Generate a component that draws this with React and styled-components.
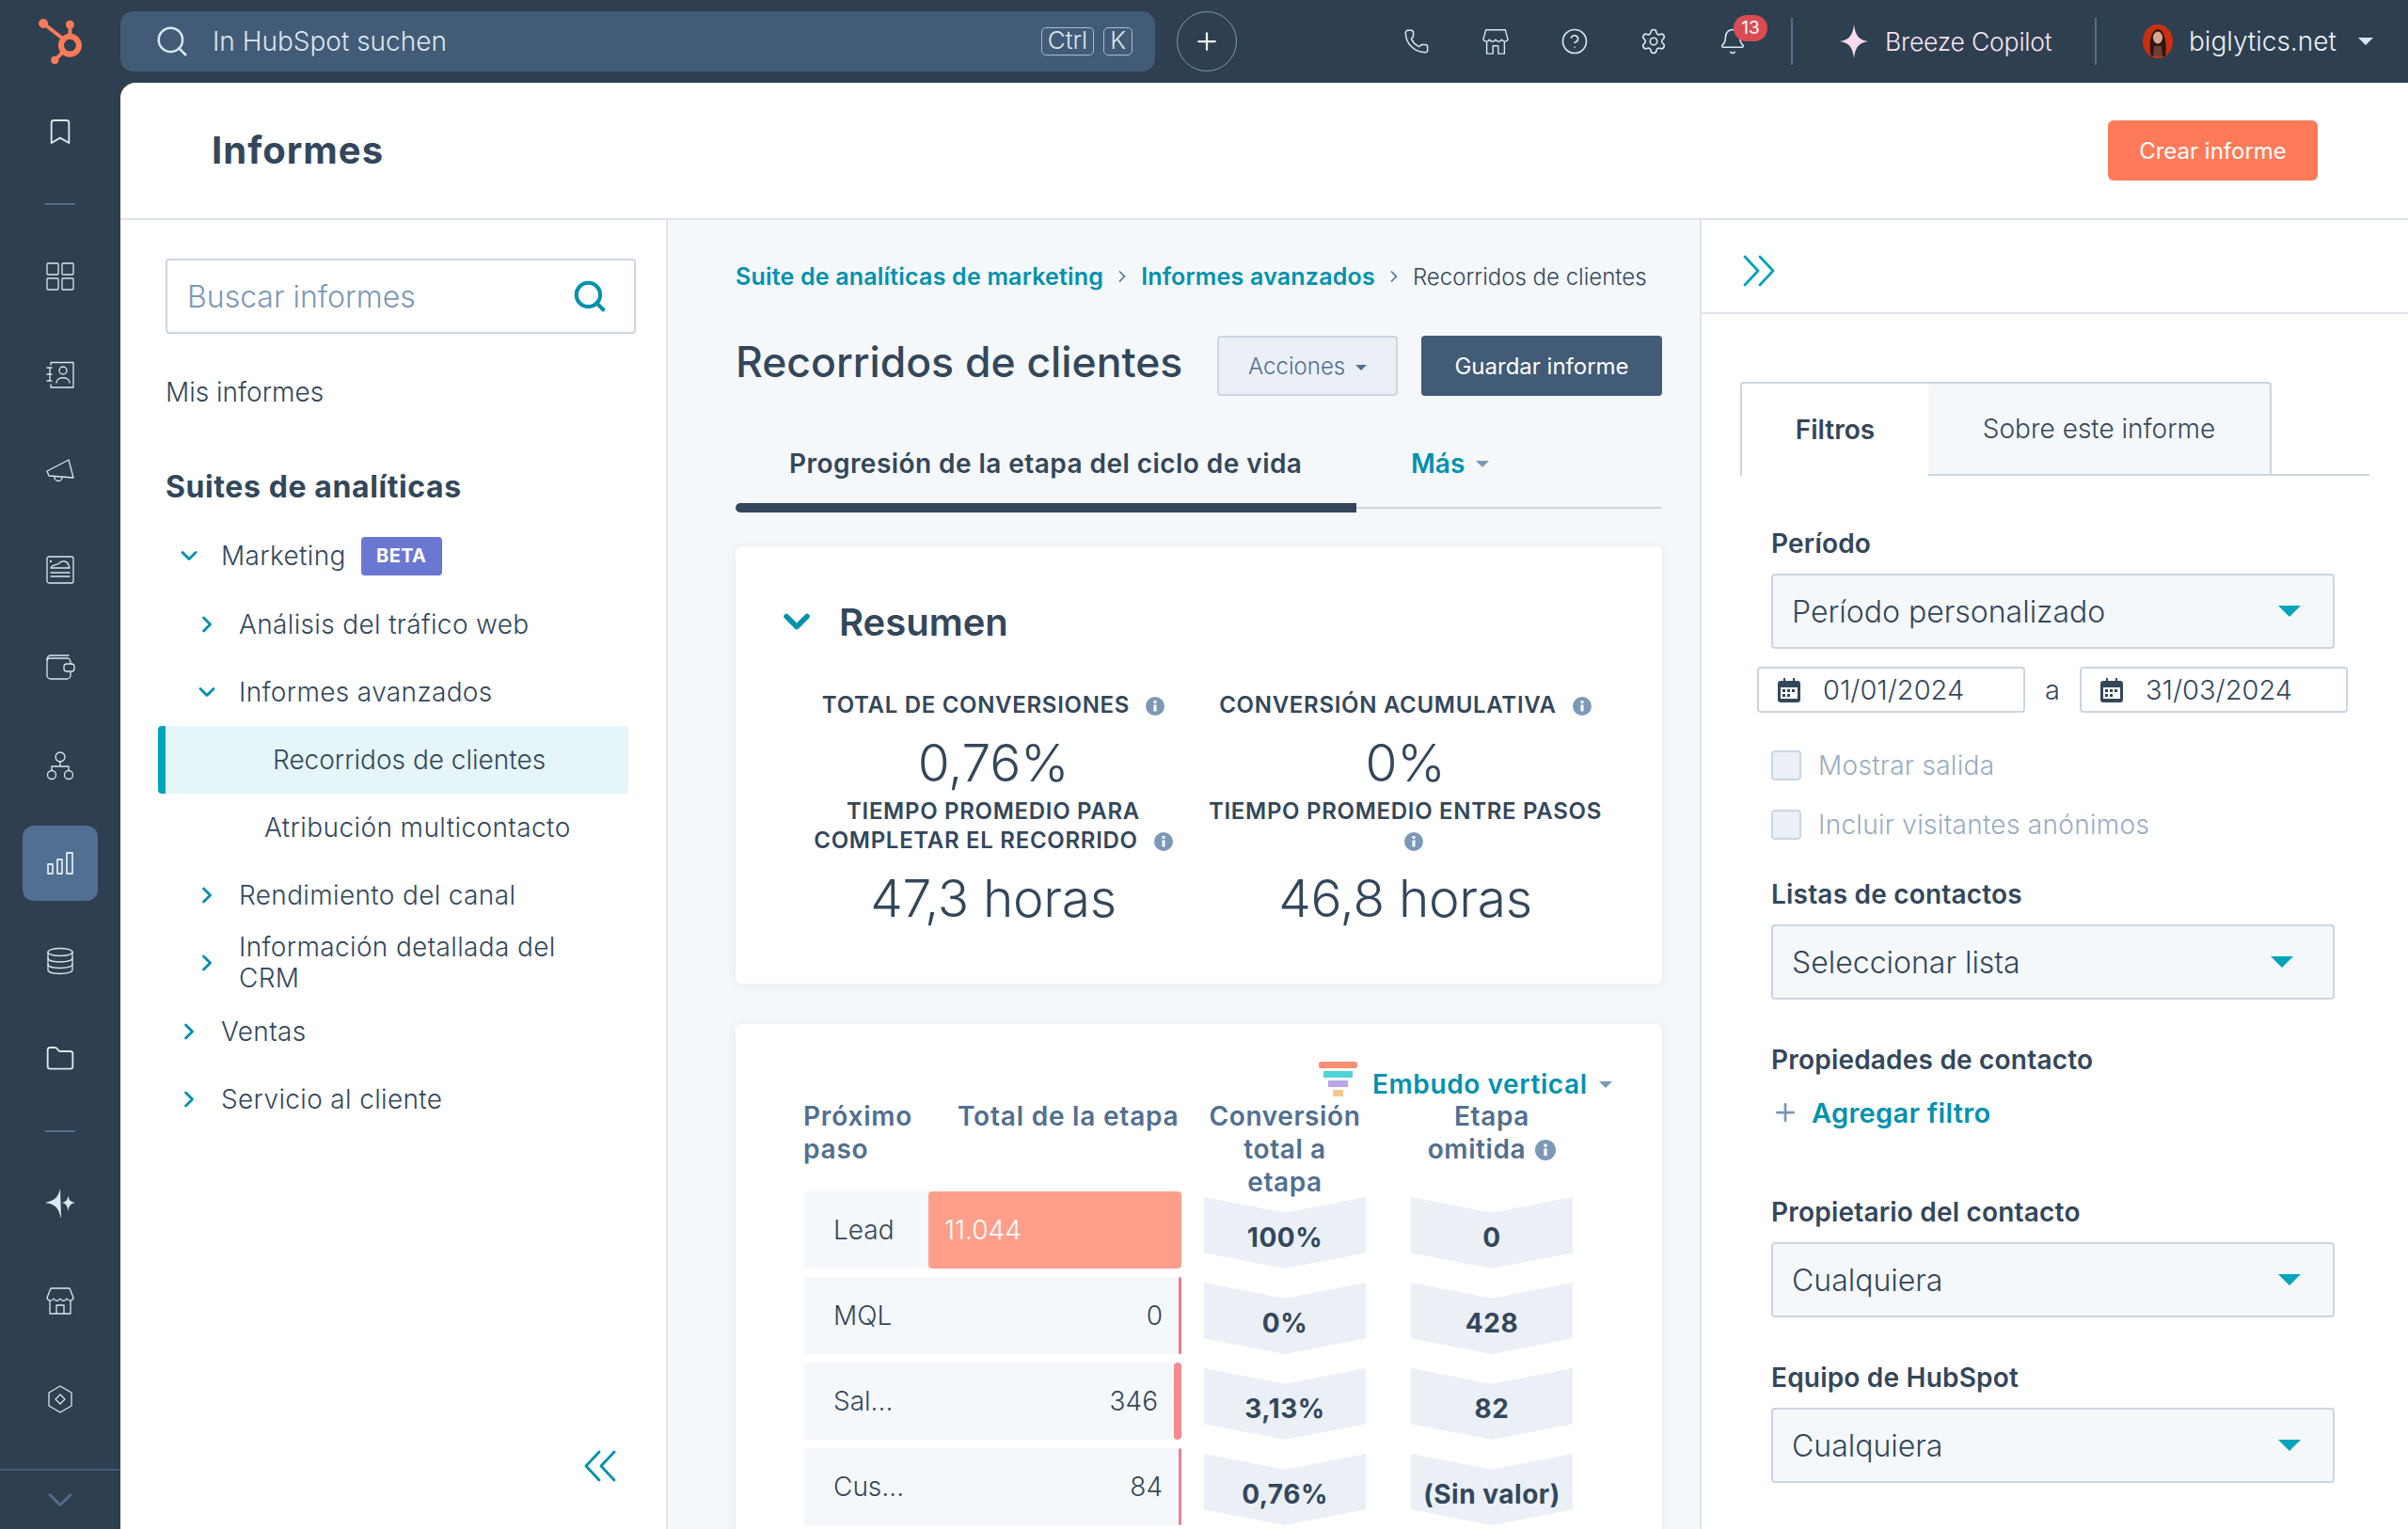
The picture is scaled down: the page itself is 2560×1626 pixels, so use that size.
import React from 'react'
import styled, { createGlobalStyle } from 'styled-components'
import {
  Phone, CircleHelp, Settings, Bell, Search, Plus, Bookmark,
  ChevronDown, ChevronRight, Folder,
} from 'lucide-react'
import { SiHubspot } from 'react-icons/si'

const GlobalStyle = createGlobalStyle`
  * { box-sizing: border-box; }
  html, body { margin: 0; padding: 0; }
  body {
    font-family: Inter, "Noto Sans", sans-serif;
    color: #33475b;
    background: #2e3f50;
  }
`

const Sparkle = ({ size = 28, color = '#f8dcec' }) => (
  <svg width={size} height={size} viewBox="0 0 24 24" fill={color}>
    <path d="M12 0C13 8 15.500 11 22 12C15.500 13 13 16 12 24C11 16 8.500 13 2 12C8.500 11 11 8 12 0Z" />
  </svg>
)

const railStroke = { fill: 'none', stroke: '#dbe6f0', strokeWidth: 1.3, strokeLinejoin: 'round', strokeLinecap: 'round' }

const GridIcon = () => (
  <svg width="32" height="32" viewBox="0 0 32 32" {...railStroke}>
    <rect x="2" y="2" width="12" height="12" rx="1" />
    <rect x="18" y="2" width="12" height="12" rx="1" />
    <rect x="2" y="18" width="12" height="12" rx="1" />
    <rect x="18" y="18" width="12" height="12" rx="1" />
  </svg>
)
const ContactsIcon = () => (
  <svg width="32" height="32" viewBox="0 0 32 32" {...railStroke}>
    <path d="M6 6V3.500H30V30H6V27" />
    <path d="M2 9H7M2 16H7M2 23H7M5 9V23" />
    <circle cx="19" cy="12" r="4" />
    <path d="M12 25C12 18 26 18 26 25" />
  </svg>
)
const MegaphoneIcon = () => (
  <svg width="32" height="32" viewBox="0 0 32 32" {...railStroke}>
    <path d="M2 15L25 3L30 22L4 20Z" />
    <path d="M10 21A4 4 0 0 0 18 22" />
  </svg>
)
const ContentIcon = () => (
  <svg width="32" height="32" viewBox="0 0 32 32" {...railStroke}>
    <rect x="2" y="2" width="28" height="28" rx="2" />
    <path d="M6 14C8 10 13 11 15 9C18 5 24 7 25 11C25 12 26 13 26 14Z" />
    <path d="M6 19H26M6 23H26" />
    <circle cx="6" cy="7" r="0.500" />
  </svg>
)
const WalletIcon = () => (
  <svg width="32" height="32" viewBox="0 0 32 32" {...railStroke}>
    <path d="M25 3H6A4 4 0 0 0 2 7V24A4 4 0 0 0 6 28H23A4 4 0 0 0 27 24V21" />
    <path d="M2 8A3 3 0 0 1 5 6H23A4 4 0 0 1 27 10V12" />
    <rect x="20" y="12" width="11" height="8" rx="3" />
  </svg>
)
const NetworkIcon = () => (
  <svg width="32" height="32" viewBox="0 0 32 32" {...railStroke}>
    <circle cx="16" cy="7" r="5" />
    <circle cx="7" cy="26" r="4.500" />
    <circle cx="25" cy="26" r="4.500" />
    <path d="M16 12V17M7 21V17H25V21" />
  </svg>
)
const BarsIcon = () => (
  <svg width="32" height="32" viewBox="0 0 32 32" {...railStroke} strokeWidth="1.800">
    <rect x="3" y="17" width="5" height="10" />
    <rect x="13" y="12" width="5" height="15" />
    <rect x="23" y="5" width="6" height="22" />
  </svg>
)
const StackIcon = () => (
  <svg width="32" height="32" viewBox="0 0 32 32" {...railStroke}>
    <ellipse cx="16" cy="6.500" rx="13" ry="4" />
    <path d="M3 6.500V25.500C3 28 9 29.500 16 29.500C23 29.500 29 28 29 25.500V6.500" />
    <path d="M3 13C3 15.500 9 17 16 17C23 17 29 15.500 29 13" />
    <path d="M3 19.500C3 22 9 23.500 16 23.500C23 23.500 29 22 29 19.500" />
  </svg>
)
const AiIcon = () => (
  <svg width="34" height="34" viewBox="0 0 32 32" fill="#dbe6f0">
    <path d="M16 1L17 31C14 20 12 17 1 15C10 13 14 10 16 1Z" />
    <path d="M24 8C25 13 26 14 31 15C26 16 25 18 24 23C23 18 22 16 18 15C22 14 23 13 24 8Z" />
  </svg>
)
const ShopIcon = () => (
  <svg width="32" height="32" viewBox="0 0 32 32" {...railStroke}>
    <path d="M6 2H26L30 12C29 16 25 16 23 13C21 16 18 16 16 13C14 16 11 16 9 13C7 16 3 16 2 12Z" />
    <path d="M5 16V29H27V16M12 29V20H20V29" />
  </svg>
)
const HexIcon = () => (
  <svg width="32" height="32" viewBox="0 0 32 32" {...railStroke}>
    <path d="M16 2L28 9V23L16 30L4 23V9Z" />
    <path d="M16 11L21 16L16 21L11 16Z" />
  </svg>
)
const TopStore = () => (
  <svg width="30" height="30" viewBox="0 0 32 32" fill="none" stroke="#dbe6f0" strokeWidth="1.500" strokeLinejoin="round">
    <path d="M5 3H27L30 14C28 17 25 17 23 14C21 17 18 17 16 14C14 17 11 17 9 14C7 17 4 17 2 14Z" />
    <path d="M6 17V30H13V21H19V30H26V17" />
  </svg>
)
const Avatar = () => (
  <svg width="32" height="36" viewBox="0 0 32 36">
    <ellipse cx="16" cy="18" rx="16" ry="18" fill="#c8300f" />
    <path d="M9 34C6 22 8 6 16 5C24 6 26 22 24 34Z" fill="#2c1712" />
    <ellipse cx="16" cy="14" rx="5" ry="6.500" fill="#d9a58d" />
    <path d="M12 23H20L21 34H11Z" fill="#6d4034" />
  </svg>
)
const InfoDot = ({ size = 20 }) => (
  <svg width={size} height={size} viewBox="0 0 20 20">
    <circle cx="10" cy="10" r="10" fill="#7c98b6" />
    <rect x="8.500" y="8.500" width="3" height="7" fill="#fff" />
    <circle cx="10" cy="5.500" r="1.700" fill="#fff" />
  </svg>
)
const Calendar = () => (
  <svg width="24" height="26" viewBox="0 0 24 26">
    <path d="M6 0h2v3h8V0h2v3h3a3 3 0 0 1 3 3v17a3 3 0 0 1-3 3H3a3 3 0 0 1-3-3V6a3 3 0 0 1 3-3h3Z" fill="#33475b" />
    <rect x="3" y="10" width="18" height="12" fill="#fff" />
    <path d="M5 12h3v3H5zM10 12h3v3h-3zM15 12h3v3h-3zM5 17h3v3H5zM10 17h3v3h-3z" fill="#33475b" />
  </svg>
)
const Funnel = () => (
  <svg width="41" height="37" viewBox="0 0 41 37">
    <rect width="41" height="7" rx="2" fill="#ff8f73" />
    <rect x="5" y="10" width="31" height="7" fill="#51d3d9" />
    <rect x="10" y="20" width="21" height="7" fill="#b9a5e8" />
    <rect x="15" y="30" width="11" height="7" fill="#f5c78e" />
  </svg>
)
const DoubleChevron = ({ flip }) => (
  <svg width="34" height="34" viewBox="0 0 34 34" fill="none" stroke="currentColor" strokeWidth="2.800"
    strokeLinecap="round" strokeLinejoin="round">
    <path d={flip ? 'M16 2L2 17L16 32M32 2L18 17L32 32' : 'M2 2L16 17L2 32M18 2L32 17L18 32'} />
  </svg>
)

const AppShell = styled.div`
  width: 2560px;
  height: 1626px;
  display: grid;
  grid-template-columns: 128px 1fr;
  grid-template-rows: 88px 1fr;
  overflow: hidden;
  background: #2e3f50;
`
const TopBar = styled.header`
  grid-column: 1 / 3;
  display: flex;
  align-items: center;
`
const LogoSlot = styled.div`
  width: 128px;
  display: flex;
  justify-content: center;
  color: #ff7a59;
  font-size: 48px;
  line-height: 0;
`
const GlobalSearch = styled.div`
  width: 1100px;
  height: 64px;
  border-radius: 14px;
  background: #425b76;
  display: flex;
  align-items: center;
  padding: 0 24px 0 36px;
  color: #dbe6f0;
  font-size: 28px;
  font-weight: 300;
`
const SearchLabel = styled.span`
  margin-left: 24px;
  flex: 1;
`
const Kbd = styled.span`
  height: 30px;
  padding: 0 6px;
  margin-left: 10px;
  border: 1.5px solid #a9bccf;
  border-radius: 5px;
  font-size: 26px;
  line-height: 26px;
`
const PlusCircle = styled.div`
  width: 64px;
  height: 64px;
  margin-left: 23px;
  border: 1.5px solid #7c98b6;
  border-radius: 50%;
  display: flex;
  align-items: center;
  justify-content: center;
`
const TopActions = styled.div`
  margin-left: auto;
  display: flex;
  align-items: center;
`
const TopIcon = styled.div`
  position: relative;
  width: 84px;
  display: flex;
  justify-content: center;
`
const NotifyBadge = styled.span`
  position: absolute;
  top: -13px;
  left: 43px;
  width: 36px;
  height: 28px;
  border-radius: 14px;
  background: #d94c53;
  color: #fff;
  font-size: 19px;
  line-height: 28px;
  text-align: center;
`
const TopDivider = styled.span`
  width: 2px;
  height: 50px;
  background: #516f90;
`
const BreezeMenu = styled.div`
  width: 323px;
  height: 50px;
  padding-left: 47px;
  margin-left: 20px;
  border-left: 2px solid #516f90;
  display: flex;
  align-items: center;
  gap: 15px;
  color: #f8e4f0;
  font-size: 26.500px;
  font-weight: 300;
  letter-spacing: -0.200px;
`
const UserMenu = styled.div`
  width: 331px;
  padding-left: 49px;
  display: flex;
  align-items: center;
  color: #eaf0f6;
  font-size: 28px;
  font-weight: 300;
`
const UserName = styled.span`
  margin-left: 17px;
`
const Caret = styled.span`
  display: inline-block;
  vertical-align: middle;
  width: 0;
  height: 0;
  margin-left: ${p => p.$gap ?? 8}px;
  border-left: ${p => p.$size ?? 6}px solid transparent;
  border-right: ${p => p.$size ?? 6}px solid transparent;
  border-top: ${p => p.$size ?? 6}px solid ${p => p.$color ?? '#7c98b6'};
`
const ToolbarCaret = styled(Caret)`
  margin-top: 21px;
`

const Rail = styled.nav`
  display: flex;
  flex-direction: column;
  align-items: center;
`
const RailItem = styled.div`
  width: 80px;
  height: 80px;
  margin-bottom: 24px;
  border-radius: 12px;
  display: flex;
  align-items: center;
  justify-content: center;
  background: ${p => (p.$active ? '#516f90' : 'transparent')};
  &:first-child { margin-top: 12px; }
`
const RailRule = styled.span`
  width: 32px;
  height: 2px;
  margin: 12px 0 36px;
  background: #516f90;
`
const RailFooter = styled.div`
  margin-top: auto;
  width: 100%;
  height: 64px;
  border-top: 2px solid #425b76;
  display: flex;
  align-items: center;
  justify-content: center;
`

const Content = styled.main`
  background: #fff;
  border-top-left-radius: 16px;
  display: flex;
  flex-direction: column;
  min-height: 0;
`
const PageHeader = styled.div`
  height: 146px;
  flex: none;
  display: flex;
  align-items: center;
  justify-content: space-between;
  padding: 0 96px 0 97px;
  border-bottom: 2px solid #dfe3eb;
`
const PageTitle = styled.h1`
  margin: 0 0 2px;
  font-size: 40px;
  font-weight: 700;
  letter-spacing: 1px;
`
const CreateButton = styled.button`
  width: 223px;
  height: 64px;
  border: 0;
  border-radius: 6px;
  background: #ff7a59;
  color: #fff;
  font: 400 24px Inter, sans-serif;
`
const Columns = styled.div`
  flex: 1;
  min-height: 0;
  display: grid;
  grid-template-columns: 580px 1101px 1fr;
`

const ReportNav = styled.aside`
  display: flex;
  flex-direction: column;
  padding: 41px 32px 50px 48px;
`
const NavSearch = styled.div`
  width: 500px;
  height: 80px;
  border: 2px solid #cbd6e2;
  border-radius: 4px;
  display: flex;
  align-items: center;
  justify-content: space-between;
  padding: 0 28px 0 21px;
  color: #7c98b6;
  font-size: 32px;
  font-weight: 300;
`
const NavPlain = styled.div`
  height: 72px;
  margin-top: 26px;
  display: flex;
  align-items: center;
  font-size: 28px;
  font-weight: 300;
`
const NavHeading = styled.h2`
  margin: 28px 0 2px;
  height: 72px;
  display: flex;
  align-items: center;
  font-size: 32px;
  font-weight: 700;
  letter-spacing: 0.600px;
`
const NavRow = styled.div`
  min-height: 72px;
  margin-bottom: ${p => p.$after ?? 0}px;
  padding-left: ${p => p.$indent ?? 0}px;
  display: flex;
  align-items: center;
  font-size: 28px;
  font-weight: 300;
  line-height: 33px;
  letter-spacing: 0.350px;
`
const NavChevron = styled.span`
  flex: none;
  width: 50px;
  margin-right: 9px;
  display: flex;
  justify-content: center;
  color: #0091ae;
`
const NavSub = styled.div`
  height: 72px;
  padding-left: 105px;
  display: flex;
  align-items: center;
  font-size: 28px;
  font-weight: 300;
  letter-spacing: 0.400px;
`
const NavActive = styled.div`
  width: 500px;
  height: 72px;
  margin-left: -8px;
  padding-left: 114px;
  border-left: 8px solid #00a4bd;
  border-radius: 4px;
  background: #e5f5f8;
  display: flex;
  align-items: center;
  font-size: 28px;
  font-weight: 300;
`
const BetaBadge = styled.span`
  width: 86px;
  height: 41px;
  margin-left: 16px;
  border-radius: 4px;
  background: #6a78d1;
  color: #fff;
  font-size: 20px;
  font-weight: 700;
  line-height: 41px;
  text-align: center;
`
const CollapseLeft = styled.div`
  margin-top: auto;
  align-self: flex-end;
  margin-right: 21px;
  color: #0091ae;
  line-height: 0;
`

const ReportMain = styled.section`
  background: #f5f8fa;
  border-left: 2px solid #dfe3eb;
  border-right: 2px solid #dfe3eb;
  padding: 44px 40px 0 72px;
  overflow: hidden;
`
const Breadcrumbs = styled.div`
  height: 32px;
  display: flex;
  align-items: center;
  font-size: 25px;
`
const Crumb = styled.span`
  color: #0091ae;
  font-weight: 600;
  letter-spacing: 0.200px;
`
const CrumbCurrent = styled.span`
  font-size: 24px;
  font-weight: 300;
`
const CrumbSep = styled.span`
  display: flex;
  margin: 0 10px;
  color: #516f90;
`
const TitleRow = styled.div`
  margin-top: 47px;
  display: flex;
  align-items: center;
  height: 64px;
`
const ReportTitle = styled.h2`
  margin: 0 0 8px;
  font-size: 44.500px;
  font-weight: 500;
  flex: 1;
`
const ActionsButton = styled.button`
  width: 192px;
  height: 64px;
  margin-right: 25px;
  border: 2px solid #cbd6e2;
  border-radius: 4px;
  background: #eaf0f6;
  color: #506e91;
  font: 300 24px Inter, sans-serif;
`
const SaveButton = styled.button`
  width: 256px;
  height: 64px;
  border: 0;
  border-radius: 4px;
  background: #425b76;
  color: #fff;
  font: 400 24px Inter, sans-serif;
`
const TabRow = styled.div`
  height: 84px;
  margin-top: 30px;
  display: flex;
  font-size: 28px;
  font-weight: 600;
`
const ReportTab = styled.div`
  width: 660px;
  padding: 0 0 0 57px;
  display: flex;
  align-items: center;
  letter-spacing: 0.450px;
`
const MoreTab = styled.div`
  padding: 0 0 0 58px;
  display: flex;
  align-items: center;
  color: #0091ae;
`
const TabTrack = styled.div`
  height: 10px;
  display: flex;
  align-items: center;
`
const TabFill = styled.span`
  width: 660px;
  height: 10px;
  border-radius: 5px 0 0 5px;
  background: #33475b;
`
const TabRest = styled.span`
  flex: 1;
  height: 2px;
  background: #cbd6e2;
`
const Card = styled.div`
  background: #fff;
  border-radius: 6px;
  box-shadow: 0 1px 12px rgba(45, 62, 80, 0.08);
`
const SummaryCard = styled(Card)`
  height: 465px;
  margin-top: 36px;
  padding: 50px 0 0 48px;
`
const SummaryHead = styled.div`
  height: 60px;
  margin-bottom: 43px;
  display: flex;
  align-items: center;
  gap: 23px;
  font-size: 40px;
  font-weight: 600;
  color: #33475b;
`
const SummaryChevron = styled.span`
  display: flex;
  margin-left: -5px;
  color: #0091ae;
`
const StatGrid = styled.div`
  display: grid;
  grid-template-columns: 452px 424px;
`
const Stat = styled.div`
  text-align: center;
`
const StatLabel = styled.div`
  min-height: ${p => (p.$tall ? 62 : 31)}px;
  font-size: 24px;
  font-weight: 600;
  line-height: 31px;
  letter-spacing: 0.700px;
  white-space: nowrap;
  svg { margin-left: 17px; vertical-align: -3px; }
`
const StatValue = styled.div`
  height: 72px;
  margin: 10px 0 0;
  font-size: 55px;
  font-weight: 300;
  line-height: 72px;
  letter-spacing: -0.300px;
`
const ChartCard = styled(Card)`
  margin-top: 43px;
  padding: 40px 0 0 72px;
  height: 700px;
`
const ChartToolbar = styled.div`
  height: 41px;
  padding-left: 548px;
  display: flex;
  align-items: flex-start;
  gap: 16px;
  color: #0091ae;
  font-size: 28px;
  font-weight: 600;
  line-height: 48px;
  letter-spacing: 0.600px;
`
const TableGrid = styled.div`
  display: grid;
  grid-template-columns: 402px 196px 220px;
  > :nth-child(3n + 2) { margin-left: 24px; }
  > :nth-child(3n) { margin-left: 48px; }
`
const HeadSteps = styled.div`
  height: 97px;
  display: flex;
  color: #516f90;
  font-size: 28px;
  font-weight: 600;
  line-height: 35px;
  letter-spacing: 0.800px;
`
const HeadNext = styled.span`
  width: 164px;
`
const HeadCell = styled.div`
  height: 97px;
  color: #516f90;
  font-size: 28px;
  font-weight: 600;
  line-height: 35px;
  letter-spacing: 0.600px;
  text-align: center;
  white-space: nowrap;
  svg { margin-left: 10px; vertical-align: -2px; }
`
const StepRow = styled.div`
  height: 82px;
  margin-bottom: 9px;
  border-radius: 4px;
  background: #f5f8fa;
  display: flex;
  align-items: center;
  font-size: 28px;
  font-weight: 300;
`
const StepName = styled.span`
  width: 133px;
  padding-left: 32px;
`
const LeadBar = styled.span`
  flex: 1;
  align-self: stretch;
  padding-left: 17px;
  border-radius: 4px;
  background: #ff9f8a;
  color: #fff;
  display: flex;
  align-items: center;
`
const StepValue = styled.span`
  flex: 1;
  padding-right: ${p => p.$pad}px;
  text-align: right;
`
const StepBar = styled.span`
  flex: none;
  align-self: stretch;
  width: ${p => p.$w}px;
  border-radius: 4px;
  background: ${p => p.$color};
`
const Chevron = styled.div`
  align-self: end;
  height: 76px;
  margin-bottom: 9px;
  background: #eaf0f6;
  clip-path: polygon(0 0, 50% 22%, 100% 0, 100% 78%, 50% 100%, 0 78%);
  display: flex;
  align-items: center;
  justify-content: center;
  padding-top: 10px;
  font-size: 28px;
  font-weight: 700;
  letter-spacing: 0.500px;
  white-space: nowrap;
`

const SidePanel = styled.aside`
  overflow: hidden;
`
const SideTop = styled.div`
  height: 100px;
  padding: 9px 0 0 44px;
  display: flex;
  align-items: center;
  color: #00a4bd;
  border-bottom: 2px solid #dfe3eb;
`
const SideTabs = styled.div`
  margin: 72px 41px 0 41px;
  height: 100px;
  display: flex;
  border-bottom: 2px solid #cbd6e2;
`
const SideTab = styled.div`
  width: ${p => p.$w}px;
  margin-bottom: ${p => (p.$active ? -2 : 0)}px;
  display: flex;
  align-items: center;
  justify-content: center;
  border: 2px solid #cbd6e2;
  border-left-width: ${p => (p.$active ? 2 : 0)}px;
  border-bottom-width: 0;
  border-right-width: ${p => (p.$active ? 0 : 2)}px;
  border-radius: ${p => (p.$active ? '4px 0 0 0' : '0 4px 0 0')};
  background: ${p => (p.$active ? '#fff' : '#f5f8fa')};
  font-size: 28px;
  font-weight: ${p => (p.$active ? 600 : 300)};
`
const SideBody = styled.div`
  padding: 0 0 0 74px;
`
const FieldLabel = styled.div`
  height: 36px;
  margin-top: ${p => p.$top}px;
  font-size: 28px;
  font-weight: 600;
  line-height: 36px;
  letter-spacing: 0.200px;
`
const SelectBox = styled.div`
  width: 599px;
  height: 80px;
  margin-top: ${p => p.$top ?? 14}px;
  padding: 0 ${p => p.$pad ?? 34}px 0 20px;
  border: 2px solid #cbd6e2;
  border-radius: 4px;
  background: #f5f8fa;
  display: flex;
  align-items: center;
  justify-content: space-between;
  font-size: 32px;
  font-weight: 300;
`
const DateRow = styled.div`
  margin: 19px 0 0 -15px;
  display: flex;
  align-items: center;
  font-size: 29px;
  font-weight: 300;
`
const DateBox = styled.div`
  width: 285px;
  height: 49px;
  padding-left: 20px;
  border: 2px solid #cbd6e2;
  border-radius: 4px;
  display: flex;
  align-items: center;
  gap: 24px;
`
const DateJoin = styled.span`
  width: 58px;
  text-align: center;
`
const CheckRow = styled.div`
  height: 32px;
  margin-top: ${p => p.$top}px;
  display: flex;
  align-items: center;
  gap: 18px;
  color: #99acc2;
  font-size: 28px;
  font-weight: 300;
  letter-spacing: 0.300px;
`
const CheckBox = styled.span`
  width: 32px;
  height: 32px;
  border: 2px solid #cbd6e2;
  border-radius: 4px;
  background: #eaf0f6;
`
const AddFilter = styled.div`
  margin-top: 20px;
  height: 36px;
  display: flex;
  align-items: center;
  gap: 13px;
  color: #0091ae;
  font-size: 29px;
  font-weight: 600;
  letter-spacing: 0.300px;
`
const AddIcon = styled.span`
  display: flex;
  color: #7c98b6;
`

const railItems = [
  [<Bookmark key="b" size={32} color="#dbe6f0" strokeWidth={1.4} />],
  'rule',
  [<GridIcon key="g" />],
  [<ContactsIcon key="c" />],
  [<MegaphoneIcon key="m" />],
  [<ContentIcon key="n" />],
  [<WalletIcon key="w" />],
  [<NetworkIcon key="t" />],
  [<BarsIcon key="s" />, true],
  [<StackIcon key="d" />],
  [<Folder key="f" size={32} color="#dbe6f0" strokeWidth={1.4} />],
  'rule',
  [<AiIcon key="a" />],
  [<ShopIcon key="h" />],
  [<HexIcon key="x" />],
]

const stats = [
  { label: 'TOTAL DE CONVERSIONES', value: '0,76%' },
  { label: 'CONVERSIÓN ACUMULATIVA', value: '0%' },
  { label: <>TIEMPO PROMEDIO PARA<br />COMPLETAR EL RECORRIDO</>, value: '47,3 horas', tall: true },
  { label: <>TIEMPO PROMEDIO ENTRE PASOS<br /></>, value: '46,8 horas', tall: true },
]

const steps = [
  { name: 'Lead', lead: '11.044', conv: '100%', skip: '0' },
  { name: 'MQL', value: '0', pad: 17, bar: 3, color: '#f2798a', conv: '0%', skip: '428' },
  { name: 'Sal...', value: '346', pad: 17, bar: 8, color: '#f58a8f', conv: '3,13%', skip: '82' },
  { name: 'Cus...', value: '84', pad: 17, bar: 3, color: '#e8829c', conv: '0,76%', skip: '(Sin valor)' },
]

const Select = ({ children, top, pad }) => (
  <SelectBox $top={top} $pad={pad}>
    {children}
    <Caret $size={12} $color="#00a4bd" />
  </SelectBox>
)

export default function App() {
  return (
    <AppShell>
      <GlobalStyle />
      <TopBar>
        <LogoSlot><SiHubspot /></LogoSlot>
        <GlobalSearch>
          <Search size={38} strokeWidth={1.6} />
          <SearchLabel>In HubSpot suchen</SearchLabel>
          <Kbd>Ctrl</Kbd>
          <Kbd>K</Kbd>
        </GlobalSearch>
        <PlusCircle><Plus size={30} color="#eaf0f6" strokeWidth={1.8} /></PlusCircle>
        <TopActions>
          <TopIcon><Phone size={28} color="#dbe6f0" strokeWidth={1.3} /></TopIcon>
          <TopIcon><TopStore /></TopIcon>
          <TopIcon><CircleHelp size={30} color="#dbe6f0" strokeWidth={1.3} /></TopIcon>
          <TopIcon><Settings size={30} color="#dbe6f0" strokeWidth={1.3} /></TopIcon>
          <TopIcon>
            <Bell size={30} color="#dbe6f0" strokeWidth={1.3} />
            <NotifyBadge>13</NotifyBadge>
          </TopIcon>
          <BreezeMenu>
            <Sparkle size={36} />
            Breeze Copilot
          </BreezeMenu>
          <TopDivider />
          <UserMenu>
            <Avatar />
            <UserName>biglytics.net</UserName>
            <Caret $gap={23} $size={8} $color="#dbe6f0" />
          </UserMenu>
        </TopActions>
      </TopBar>

      <Rail>
        {railItems.map((item, i) =>
          item === 'rule'
            ? <RailRule key={i} />
            : <RailItem key={i} $active={item[1]}>{item[0]}</RailItem>
        )}
        <RailFooter><ChevronDown size={44} color="#516f90" strokeWidth={1.4} /></RailFooter>
      </Rail>

      <Content>
        <PageHeader>
          <PageTitle>Informes</PageTitle>
          <CreateButton>Crear informe</CreateButton>
        </PageHeader>
        <Columns>
          <ReportNav>
            <NavSearch>
              Buscar informes
              <Search size={38} color="#0091ae" strokeWidth={2.6} />
            </NavSearch>
            <NavPlain>Mis informes</NavPlain>
            <NavHeading>Suites de analíticas</NavHeading>
            <NavRow $after={1}>
              <NavChevron><ChevronDown size={28} strokeWidth={2.4} /></NavChevron>
              Marketing <BetaBadge>BETA</BetaBadge>
            </NavRow>
            <NavRow $indent={19}>
              <NavChevron><ChevronRight size={28} strokeWidth={2.4} /></NavChevron>
              Análisis del tráfico web
            </NavRow>
            <NavRow $indent={19}>
              <NavChevron><ChevronDown size={28} strokeWidth={2.4} /></NavChevron>
              Informes avanzados
            </NavRow>
            <NavActive>Recorridos de clientes</NavActive>
            <NavSub>Atribución multicontacto</NavSub>
            <NavRow $indent={19}>
              <NavChevron><ChevronRight size={28} strokeWidth={2.4} /></NavChevron>
              Rendimiento del canal
            </NavRow>
            <NavRow $indent={19} $after={1}>
              <NavChevron><ChevronRight size={28} strokeWidth={2.4} /></NavChevron>
              <span>Información detallada del<br />CRM</span>
            </NavRow>
            <NavRow>
              <NavChevron><ChevronRight size={28} strokeWidth={2.4} /></NavChevron>
              Ventas
            </NavRow>
            <NavRow>
              <NavChevron><ChevronRight size={28} strokeWidth={2.4} /></NavChevron>
              Servicio al cliente
            </NavRow>
            <CollapseLeft><DoubleChevron flip /></CollapseLeft>
          </ReportNav>

          <ReportMain>
            <Breadcrumbs>
              <Crumb>Suite de analíticas de marketing</Crumb>
              <CrumbSep><ChevronRight size={20} /></CrumbSep>
              <Crumb>Informes avanzados</Crumb>
              <CrumbSep><ChevronRight size={20} /></CrumbSep>
              <CrumbCurrent>Recorridos de clientes</CrumbCurrent>
            </Breadcrumbs>
            <TitleRow>
              <ReportTitle>Recorridos de clientes</ReportTitle>
              <ActionsButton>Acciones <Caret $size={6} $color="#516f90" $gap={4} /></ActionsButton>
              <SaveButton>Guardar informe</SaveButton>
            </TitleRow>
            <TabRow>
              <ReportTab>Progresión de la etapa del ciclo de vida</ReportTab>
              <MoreTab>Más <Caret $size={7} $color="#7c98b6" $gap={12} /></MoreTab>
            </TabRow>
            <TabTrack><TabFill /><TabRest /></TabTrack>

            <SummaryCard>
              <SummaryHead>
                <SummaryChevron><ChevronDown size={44} strokeWidth={3} /></SummaryChevron>
                Resumen
              </SummaryHead>
              <StatGrid>
                {stats.map((s, i) => (
                  <Stat key={i}>
                    <StatLabel $tall={s.tall}>{s.label}<InfoDot /></StatLabel>
                    <StatValue>{s.value}</StatValue>
                  </Stat>
                ))}
              </StatGrid>
            </SummaryCard>

            <ChartCard>
              <ChartToolbar>
                <Funnel />
                Embudo vertical
                <ToolbarCaret $size={7} $color="#7c98b6" $gap={-4} />
              </ChartToolbar>
              <TableGrid>
                <HeadSteps>
                  <HeadNext>Próximo<br />paso</HeadNext>
                  <span>Total de la etapa</span>
                </HeadSteps>
                <HeadCell>Conversión<br />total a<br />etapa</HeadCell>
                <HeadCell>Etapa<br />omitida<InfoDot size={22} /></HeadCell>
                {steps.map(s => (
                  <React.Fragment key={s.name}>
                    <StepRow>
                      <StepName>{s.name}</StepName>
                      {s.lead
                        ? <LeadBar>{s.lead}</LeadBar>
                        : <>
                            <StepValue $pad={s.pad}>{s.value}</StepValue>
                            <StepBar $w={s.bar} $color={s.color} />
                          </>}
                    </StepRow>
                    <Chevron>{s.conv}</Chevron>
                    <Chevron>{s.skip}</Chevron>
                  </React.Fragment>
                ))}
              </TableGrid>
            </ChartCard>
          </ReportMain>

          <SidePanel>
            <SideTop><DoubleChevron /></SideTop>
            <SideTabs>
              <SideTab $active $w={200}>Filtros</SideTab>
              <SideTab $w={365}>Sobre este informe</SideTab>
            </SideTabs>
            <SideBody>
              <FieldLabel $top={54}>Período</FieldLabel>
              <Select>Período personalizado</Select>
              <DateRow>
                <DateBox><Calendar />01/01/2024</DateBox>
                <DateJoin>a</DateJoin>
                <DateBox><Calendar />31/03/2024</DateBox>
              </DateRow>
              <CheckRow $top={40}><CheckBox />Mostrar salida</CheckRow>
              <CheckRow $top={31}><CheckBox />Incluir visitantes anónimos</CheckRow>
              <FieldLabel $top={40}>Listas de contactos</FieldLabel>
              <Select top={14} pad={42}>Seleccionar lista</Select>
              <FieldLabel $top={46}>Propiedades de contacto</FieldLabel>
              <AddFilter>
                <AddIcon><Plus size={30} strokeWidth={2.2} /></AddIcon>
                Agregar filtro
              </AddFilter>
              <FieldLabel $top={70}>Propietario del contacto</FieldLabel>
              <Select top={14}>Cualquiera</Select>
              <FieldLabel $top={46}>Equipo de HubSpot</FieldLabel>
              <Select top={14}>Cualquiera</Select>
            </SideBody>
          </SidePanel>
        </Columns>
      </Content>
    </AppShell>
  )
}
